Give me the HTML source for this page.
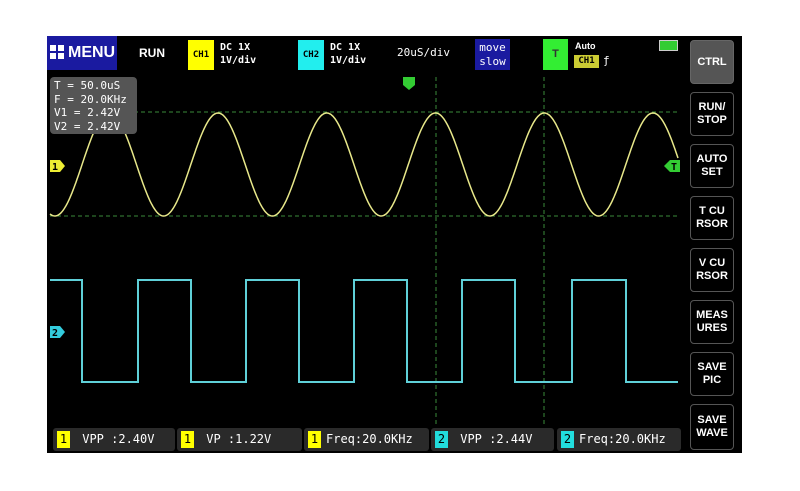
<!DOCTYPE html>
<html><head><meta charset="utf-8"><style>
body{margin:0;background:#fff;width:800px;height:491px;overflow:hidden;position:relative;font-family:"DejaVu Sans Mono","Liberation Mono",monospace}
#scr{position:absolute;left:47px;top:36px;width:695px;height:417px;background:#000}
.a{position:absolute;color:#fff;white-space:nowrap}
.btn{position:absolute;left:643px;width:42px;height:42px;border:1px solid #555;border-radius:4px;color:#fff;font:bold 11px "Liberation Sans",sans-serif;display:flex;align-items:center;justify-content:center;text-align:center;line-height:13px}
.m{position:absolute;top:392px;height:23px;background:#2a2a2a;border-radius:3px;color:#fff;font-size:12px;line-height:23px;overflow:hidden;white-space:nowrap}
.m i{font-style:normal;display:inline-block;width:13px;height:17px;margin:3px 5px 0 4px;line-height:17px;text-align:center;color:#000;vertical-align:top}
</style></head><body>
<div id="scr">
<svg width="695" height="417" style="position:absolute;left:0;top:0">
<g stroke="#3a8a3a" stroke-dasharray="4,3" stroke-width="1">
<line x1="3" y1="76" x2="630" y2="76"/><line x1="3" y1="180" x2="630" y2="180"/>
<line x1="389" y1="41" x2="389" y2="390"/><line x1="497" y1="41" x2="497" y2="390"/>
</g>
<polyline id="sin" fill="none" stroke="#e8e88a" stroke-width="1.5"/>
<polyline fill="none" stroke="#5fd0d8" stroke-width="2" points="3,244 35,244 35,346 91,346 91,244 144,244 144,346 199,346 199,244 252,244 252,346 307,346 307,244 360,244 360,346 415,346 415,244 468,244 468,346 525,346 525,244 579,244 579,346 631,346"/>
<path d="M356 41h12v8l-6 5l-6-5z" fill="#3c3"/>
<path d="M3 124h10l5 6l-5 6h-10z" fill="#ee3"/><text x="5" y="134" font-size="10" font-weight="bold">1</text>
<path d="M3 290h10l5 6l-5 6h-10z" fill="#3cd"/><text x="5" y="300" font-size="10" font-weight="bold">2</text>
<path d="M633 124h-10l-6 6l6 6h10z" fill="#3c3"/><text x="624" y="134" font-size="10" font-weight="bold">T</text>
</svg>
<div class="a" style="left:0;top:0;width:70px;height:34px;background:#1a1aa0;font:bold 16px 'Liberation Sans',sans-serif;line-height:34px"><span style="display:inline-block;width:14px;height:14px;margin:0 4px 0 3px;vertical-align:-2px;background:linear-gradient(#1a1aa0,#1a1aa0) 6px 0/2px 14px no-repeat,linear-gradient(#1a1aa0,#1a1aa0) 0 6px/14px 2px no-repeat,#fff"></span>MENU</div>
<div class="a" style="left:92px;top:10px;font:bold 12px 'Liberation Sans',sans-serif">RUN</div>
<div class="a" style="left:141px;top:4px;width:26px;height:30px;background:#ff0;color:#000;font-size:9px;font-weight:bold;line-height:30px;text-align:center">CH1</div>
<div class="a" style="left:173px;top:5px;font-size:10px;line-height:13px;font-weight:bold">DC  1X<br>1V/div</div>
<div class="a" style="left:251px;top:4px;width:26px;height:30px;background:#2ee;color:#000;font-size:9px;font-weight:bold;line-height:30px;text-align:center">CH2</div>
<div class="a" style="left:283px;top:5px;font-size:10px;line-height:13px;font-weight:bold">DC  1X<br>1V/div</div>
<div class="a" style="left:350px;top:10px;font-size:11px">20uS/div</div>
<div class="a" style="left:428px;top:3px;width:35px;height:31px;background:#1a1aa0;font-size:11px;line-height:14px;text-align:center;padding-top:2px;box-sizing:border-box">move<br>slow</div>
<div class="a" style="left:496px;top:3px;width:25px;height:31px;background:#3e3;font:bold 11px 'Liberation Sans';line-height:31px;text-align:center;color:#333">T</div>
<div class="a" style="left:528px;top:5px;font:bold 9px 'Liberation Sans'">Auto</div>
<div class="a" style="left:527px;top:19px;width:25px;height:13px;background:#cc3;color:#000;font-size:9px;font-weight:bold;line-height:13px;text-align:center">CH1</div>
<div class="a" style="left:556px;top:18px;font-size:11px">ƒ</div>
<div class="a" style="left:612px;top:4px;width:17px;height:9px;background:#3c3;border:1px solid #ccc"></div>
<div class="a" style="left:3px;top:41px;width:87px;height:57px;background:#555;border-radius:4px;font-size:11px;line-height:13.5px;padding:2px 0 0 4px;box-sizing:border-box">T = 50.0uS<br>F = 20.0KHz<br>V1 = 2.42V<br>V2 = 2.42V</div>
<div class="btn" style="top:4px;background:#555;border-color:#666">CTRL</div>
<div class="btn" style="top:56px">RUN/<br>STOP</div>
<div class="btn" style="top:108px">AUTO<br>SET</div>
<div class="btn" style="top:160px">T CU<br>RSOR</div>
<div class="btn" style="top:212px">V CU<br>RSOR</div>
<div class="btn" style="top:264px">MEAS<br>URES</div>
<div class="btn" style="top:316px">SAVE<br>PIC</div>
<div class="btn" style="top:368px;height:44px">SAVE<br>WAVE</div>
<div class="m" style="left:6px;width:122px"><i style="background:#ff0">1</i> VPP :2.40V</div>
<div class="m" style="left:130px;width:125px"><i style="background:#ff0">1</i>  VP  :1.22V</div>
<div class="m" style="left:257px;width:125px"><i style="background:#ff0">1</i>Freq:20.0KHz</div>
<div class="m" style="left:384px;width:123px"><i style="background:#2dd">2</i> VPP :2.44V</div>
<div class="m" style="left:510px;width:124px"><i style="background:#2dd">2</i>Freq:20.0KHz</div>
</div>
<script>
var p=[];for(var x=3;x<=631;x+=1){var X=x+47;var y=164.5-51.5*Math.cos(2*Math.PI*(X-218)/108.75)-36;p.push(x+","+y.toFixed(1));}
document.getElementById("sin").setAttribute("points",p.join(" "));
</script>
</body></html>
